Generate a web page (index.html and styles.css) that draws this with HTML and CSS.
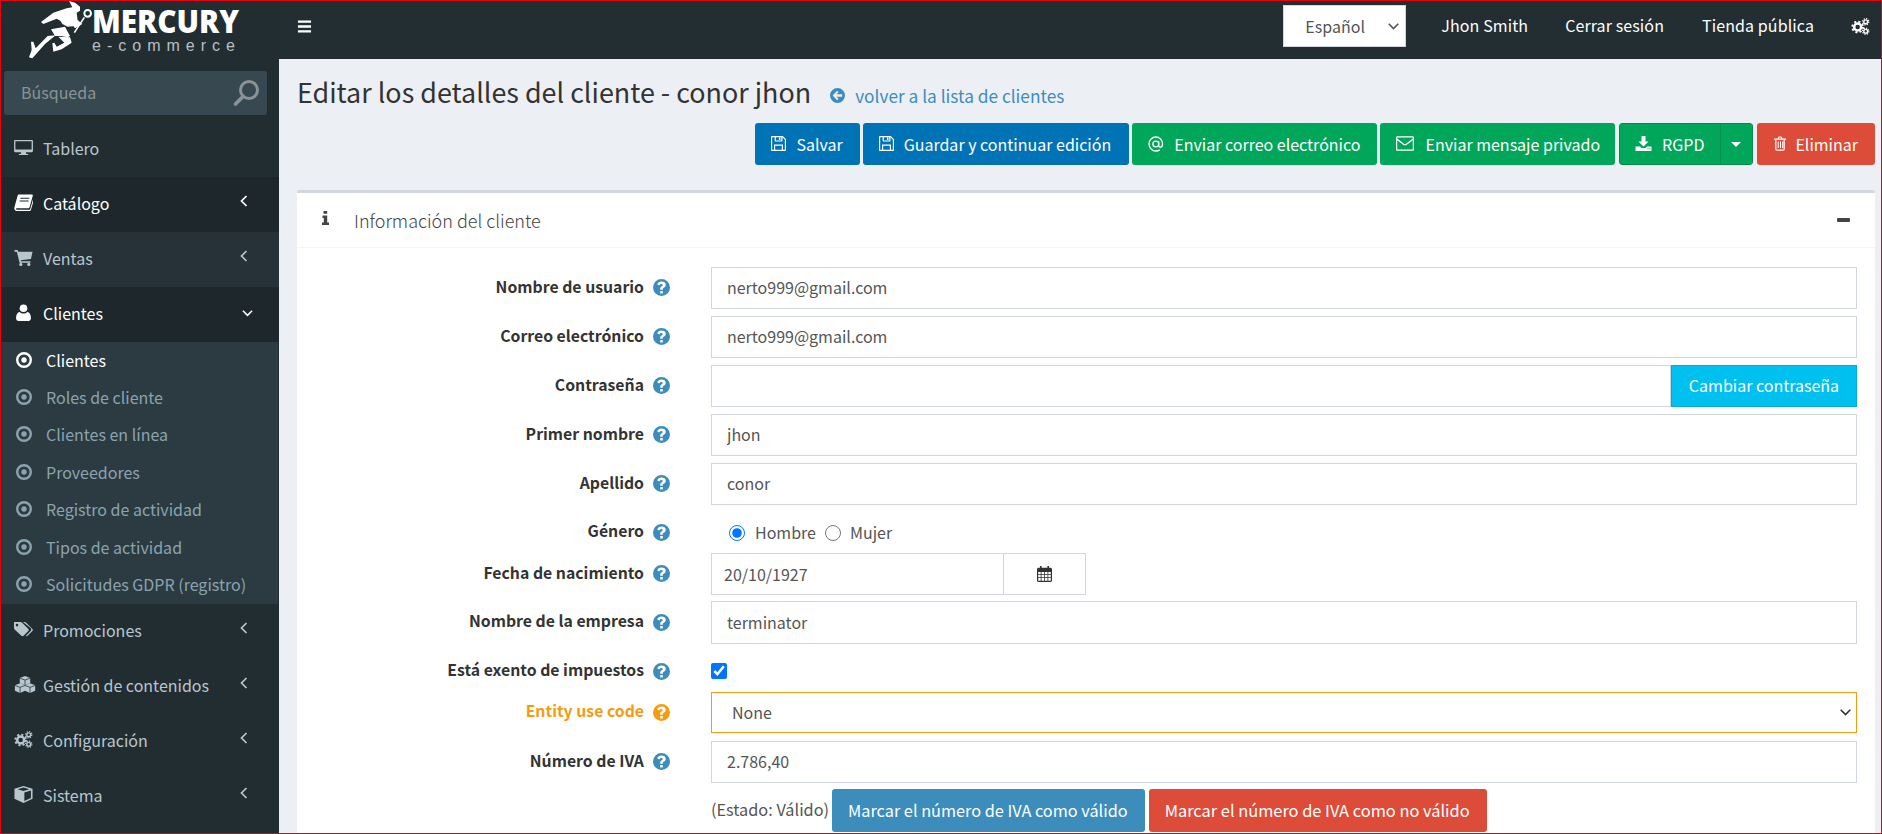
FILE: index.html
```html
<!DOCTYPE html>
<html lang="es">
<head>
    <meta charset="UTF-8">
    <title>Editar los detalles del cliente</title>
    <link rel="stylesheet" href="styles.css">
</head>
<body>
<svg class="icon-defs" width="0" height="0">
    <defs>
        <symbol id="i-bars" viewBox="0 0 16 16"><path d="M1 1.500h14v2.600H1zM1 6.700h14v2.600H1zM1 11.900h14v2.600H1z"/></symbol>
        <symbol id="i-desktop" viewBox="0 0 20 18"><path d="M1.200 1h17.600c.6 0 1.200.5 1.200 1.200v10.600c0 .7-.6 1.200-1.200 1.200H12.500l.5 2h2v1H5v-1h2l.5-2H1.200C.5 14 0 13.500 0 12.800V2.200C0 1.500.5 1 1.200 1zM1.400 2.400v8.600h17.200V2.400z"/></symbol>
        <symbol id="i-book" viewBox="0 0 18 16"><path d="M5 .5h12c.7 0 1 .5.8 1.100l-3 10.700c-.2.800-.8 1.200-1.600 1.200H2.600c-.7 0-1 .6-.7 1 .2.300.6.400 1 .4h11.600c.4 0 .7-.2.8-.6l3-10.200.7.700-3 10.300c-.2.700-.8 1.100-1.500 1.100H2.600C1.200 16 0 14.600.3 13L3.400 1.700C3.600 1 4.200.5 5 .5zM6 3.500v1h8.500v-1zM5.300 6v1h8.500V6z"/></symbol>
        <symbol id="i-cart" viewBox="0 0 17 16"><path d="M0 1h3l.5 1.700H17l-1.500 6.600-9.600 1.200.3 1H15v1.500H4.800L2.200 2.500H0z"/><circle cx="6" cy="14.500" r="1.500"/><circle cx="13.500" cy="14.500" r="1.500"/></symbol>
        <symbol id="i-user" viewBox="0 0 14 16"><circle cx="7" cy="4" r="3.600"/><path d="M3.500 7.500C4.500 8.500 5.600 9 7 9s2.500-.5 3.500-1.500C12.800 7.800 14 10 14 13.500c0 1.500-1 2.500-2.300 2.500H2.300C1 16 0 15 0 13.500 0 10 1.200 7.800 3.500 7.500z"/></symbol>
        <symbol id="i-dot" viewBox="0 0 16 16"><path fill-rule="evenodd" d="M8 0a8 8 0 1 1 0 16A8 8 0 0 1 8 0zm0 2.400a5.600 5.600 0 1 0 0 11.200A5.600 5.600 0 0 0 8 2.400z"/><circle cx="8" cy="8" r="2.700"/></symbol>
        <symbol id="i-tags" viewBox="0 0 19 15"><path fill-rule="evenodd" d="M0 0h6.500c.5 0 1 .2 1.400.6l6.400 6.300c.6.600.6 1.500 0 2.100l-4.800 4.800c-.6.600-1.500.6-2.100 0L.6 7.400C.2 7 0 6.500 0 6zm3 1.800a1.300 1.300 0 1 0 0 2.600 1.300 1.300 0 0 0 0-2.600z"/><path d="M9 0h1.500c.5 0 1 .2 1.400.6l6.500 6.300c.6.600.6 1.500 0 2.100l-4.800 4.800c-.5.500-1.200.6-1.800.2l4.800-4.900c.9-1 .9-2.300 0-3.200z"/></symbol>
        <symbol id="i-cubes" viewBox="0 0 22 18"><path d="M11 0l5.500 2v5.500L11 9.500 5.500 7.500V2zM5.800 7.800L11 9.800v5.900L5.800 18 .3 15.700V9.800zM16.300 7.800l5.500 2v5.900L16.300 18 11 15.700V9.800z"/><path d="M5.500 2.300L11 4.300l5.500-2M11 4.300v5M.3 10l5.500 2 5.200-2M5.800 12v6M11 10l5.300 2 5.500-2M16.300 12v6" fill="none" stroke="#222d32" stroke-width=".8"/></symbol>
        <symbol id="i-cogs" viewBox="0 0 20 18"><g fill="none" stroke="currentColor"><circle cx="7" cy="9.500" r="3.700" stroke-width="2.600"/><circle cx="7" cy="9.500" r="5.700" stroke-width="2" stroke-dasharray="2.200 2.280"/><circle cx="15.500" cy="4" r="2" stroke-width="1.500"/><circle cx="15.500" cy="4" r="3.300" stroke-width="1.300" stroke-dasharray="1.300 1.290"/><circle cx="15.500" cy="14" r="2" stroke-width="1.500"/><circle cx="15.500" cy="14" r="3.300" stroke-width="1.300" stroke-dasharray="1.300 1.290"/></g></symbol>
        <symbol id="i-cube" viewBox="0 0 17 16"><path fill-rule="evenodd" d="M8.500 0L17 2.600v9.400l-8.500 4L0 12V2.600zM8.500 1.400L3 3l5.500 1.800L14 3zM9.300 6.200v8l6.200-3V4.300z"/></symbol>
        <symbol id="i-left" viewBox="0 0 8 12"><path d="M6.500 1L1.500 6l5 5" fill="none" stroke="currentColor" stroke-width="1.700"/></symbol>
        <symbol id="i-down" viewBox="0 0 12 8"><path d="M1 1.500l5 5 5-5" fill="none" stroke="currentColor" stroke-width="1.700"/></symbol>
        <symbol id="i-search" viewBox="0 0 26 26"><circle cx="16" cy="10" r="8.500" fill="none" stroke="currentColor" stroke-width="3"/><path d="M10 16.500L2.500 24" fill="none" stroke="currentColor" stroke-width="3.600" stroke-linecap="round"/></symbol>
        <symbol id="i-save" viewBox="0 0 14 14"><path fill-rule="evenodd" d="M1 0h10l3 3v10c0 .6-.4 1-1 1H1c-.6 0-1-.4-1-1V1c0-.6.4-1 1-1zm.1 1.100v11.800h1.700V8h8.400v4.900h1.700V3.400L10.700 1.200v3.300c0 .4-.3.600-.6.600H4c-.4 0-.6-.2-.6-.6V1.100zm2.800 8v3.800h6.200V9.100zM4.500 1.100v3h5.100v-3zM7.400 1.500h1.400v2.200H7.400z"/></symbol>
        <symbol id="i-at" viewBox="0 0 16 16"><circle cx="7.800" cy="8" r="2.900" fill="none" stroke="currentColor" stroke-width="1.300"/><path d="M10.700 5v4.600c0 1 .6 1.600 1.500 1.600 1.400 0 2.300-1.500 2.300-3.300C14.500 4 11.500 1 7.900 1 4 1 1 4 1 8c0 3.900 3 7 7 7 1.500 0 2.800-.4 3.900-1.100" fill="none" stroke="currentColor" stroke-width="1.300"/></symbol>
        <symbol id="i-envelope" viewBox="0 0 16 13"><path fill-rule="evenodd" d="M1.200 0h13.600c.7 0 1.200.5 1.200 1.200v10.600c0 .7-.5 1.200-1.200 1.200H1.200C.5 13 0 12.500 0 11.800V1.200C0 .5.500 0 1.200 0zm-.1 1.100v1l6 4.600c.5.400 1.300.4 1.800 0l6-4.600v-1zm0 2.400v8.400h13.800V3.500L9.600 7.600c-1 .7-2.200.7-3.200 0z"/></symbol>
        <symbol id="i-download" viewBox="0 0 16 15"><path d="M6 0h4v5.500h3L8 10.500 3 5.500h3zM0 10.500h4.500L6 12h4l1.500-1.500H16V15H0zM12 12.200v1.300h.9v-1.300zM14 12.200v1.300h.9v-1.300z"/></symbol>
        <symbol id="i-trash" viewBox="0 0 13 15"><path fill-rule="evenodd" d="M4 2.500L5 .8c.1-.3.4-.4.7-.4h1.700c.3 0 .6.100.7.400l1 1.700h3.400v1.200H11.300V13c0 1-.6 1.700-1.400 1.700H3.100C2.300 14.700 1.700 14 1.700 13V3.700H.5V2.500zm1.300 0h2.500l-.5-.9H5.800zM2.900 3.700V13c0 .3.100.5.300.5h6.600c.2 0 .3-.2.300-.5V3.700zM4.200 5.500h1v6.500h-1zm2.300 0h1v6.500h-1zm2.200 0h1v6.500h-1z"/></symbol>
        <symbol id="i-info" viewBox="0 0 7 14"><path d="M1.500 0h3.700v2.800H1.500zM.5 4.500h4.700v7H7V14H0v-2.500h1.800V7H.5z"/></symbol>
        <symbol id="i-help" viewBox="0 0 16 16"><path fill-rule="evenodd" d="M8 0a8 8 0 1 1 0 16A8 8 0 0 1 8 0zM6.800 11.300v2.300h2.400v-2.300zM8 2.400C5.900 2.400 4.500 3.500 4 5.100l2 1c.3-.9.900-1.500 1.800-1.500.8 0 1.300.4 1.300 1 0 .7-.5 1-1.200 1.500-.8.500-1.100 1.100-1.100 2v1h2.400v-.6c0-.5.300-.8.900-1.200 1-.6 1.900-1.400 1.900-2.900 0-2-1.800-3-3.900-3z"/></symbol>
        <symbol id="i-calendar" viewBox="0 0 15 16"><path fill-rule="evenodd" d="M3 0h1.600v1.700h5.800V0H12v1.700h1.500c.8 0 1.500.7 1.500 1.500V14.500c0 .8-.7 1.500-1.500 1.500h-12C.7 16 0 15.300 0 14.500V3.200c0-.8.7-1.500 1.500-1.500H3zM1.200 6v2.200h2.500V6zm3.300 0v2.200h2.600V6zm3.400 0v2.200h2.600V6zm3.400 0v2.200h2.500V6zM1.200 9v2.200h2.500V9zm3.300 0v2.200h2.600V9zm3.400 0v2.200h2.600V9zm3.400 0v2.200h2.500V9zM1.200 12v2.800h2.500V12zm3.300 0v2.800h2.600V12zm3.400 0v2.800h2.600V12zm3.400 0v2.800h2.500V12z"/></symbol>
        <symbol id="i-back" viewBox="0 0 16 16"><path fill-rule="evenodd" d="M8 0a8 8 0 1 1 0 16A8 8 0 0 1 8 0zm-.4 3L2.800 8l4.800 5 1.500-1.500L7 9.400h6V6.600H7l2.100-2.100z"/></symbol>
        <symbol id="i-runner" viewBox="0 3 225 180"><path d="M132 3l18 5 15 12v12l-10 6 3 24-8 16-22 2-16-8-6-10-11-6-40 16-7-6 37-28 40-13 17-3zM78 88l42-8 15 28-7 4-20-4-18 0zM68 108l24-2-32 26-38 43-10-3 8-22-2-25 7 0 7 20zM100 110l35 2 5 16-30 20-25 7-3-25 6-2 7 12 23-12zM158 60l14 12-22 13-5-7z"/><circle cx="188" cy="40" r="10" fill="none" stroke="currentColor" stroke-width="6"/><path d="M178 52l-30 46" fill="none" stroke="currentColor" stroke-width="5"/></symbol>
    </defs>
</svg>

<div class="page">
    <aside class="sidebar">
        <div class="logo">
            <svg class="logo-runner"><use href="#i-runner"/></svg>
            <div class="logo-name">MERCURY</div>
            <div class="logo-sub">e-commerce</div>
        </div>
        <div class="search-box">
            <span>Búsqueda</span>
            <svg class="search-icon"><use href="#i-search"/></svg>
        </div>
        <nav class="menu">
            <a class="menu-item"><svg class="menu-icon"><use href="#i-desktop"/></svg>Tablero</a>
            <a class="menu-item hover"><svg class="menu-icon"><use href="#i-book"/></svg>Catálogo<svg class="chev"><use href="#i-left"/></svg></a>
            <a class="menu-item light"><svg class="menu-icon"><use href="#i-cart"/></svg>Ventas<svg class="chev"><use href="#i-left"/></svg></a>
            <a class="menu-item open"><svg class="menu-icon"><use href="#i-user"/></svg>Clientes<svg class="chev-down"><use href="#i-down"/></svg></a>
            <div class="submenu">
                <a class="sub-item active"><svg class="sub-icon"><use href="#i-dot"/></svg>Clientes</a>
                <a class="sub-item"><svg class="sub-icon"><use href="#i-dot"/></svg>Roles de cliente</a>
                <a class="sub-item"><svg class="sub-icon"><use href="#i-dot"/></svg>Clientes en línea</a>
                <a class="sub-item"><svg class="sub-icon"><use href="#i-dot"/></svg>Proveedores</a>
                <a class="sub-item"><svg class="sub-icon"><use href="#i-dot"/></svg>Registro de actividad</a>
                <a class="sub-item"><svg class="sub-icon"><use href="#i-dot"/></svg>Tipos de actividad</a>
                <a class="sub-item"><svg class="sub-icon"><use href="#i-dot"/></svg>Solicitudes GDPR (registro)</a>
            </div>
            <a class="menu-item"><svg class="menu-icon"><use href="#i-tags"/></svg>Promociones<svg class="chev"><use href="#i-left"/></svg></a>
            <a class="menu-item"><svg class="menu-icon wide"><use href="#i-cubes"/></svg>Gestión de contenidos<svg class="chev"><use href="#i-left"/></svg></a>
            <a class="menu-item"><svg class="menu-icon"><use href="#i-cogs"/></svg>Configuración<svg class="chev"><use href="#i-left"/></svg></a>
            <a class="menu-item"><svg class="menu-icon"><use href="#i-cube"/></svg>Sistema<svg class="chev"><use href="#i-left"/></svg></a>
        </nav>
    </aside>

    <div class="content-wrap">
        <header class="topbar">
            <svg class="bars"><use href="#i-bars"/></svg>
            <div class="topbar-right">
                <select class="lang"><option>Español</option></select>
                <a class="top-link">Jhon Smith</a>
                <a class="top-link logout">Cerrar sesión</a>
                <a class="top-link">Tienda pública</a>
                <svg class="top-cogs"><use href="#i-cogs"/></svg>
            </div>
        </header>

        <main class="content">
            <div class="title-row">
                <h1>Editar los detalles del cliente - conor jhon</h1>
                <a class="back-link"><svg class="back-icon"><use href="#i-back"/></svg>volver a la lista de clientes</a>
            </div>
            <div class="actions">
                <button class="btn blue"><svg class="btn-icon"><use href="#i-save"/></svg>Salvar</button>
                <button class="btn blue wide-btn"><svg class="btn-icon"><use href="#i-save"/></svg>Guardar y continuar edición</button>
                <button class="btn green"><svg class="btn-icon at"><use href="#i-at"/></svg>Enviar correo electrónico</button>
                <button class="btn green msg-btn"><svg class="btn-icon env"><use href="#i-envelope"/></svg>Enviar mensaje privado</button>
                <div class="btn-group">
                    <button class="btn green"><svg class="btn-icon dl"><use href="#i-download"/></svg>RGPD</button>
                    <button class="btn green caret-btn"><span class="caret"></span></button>
                </div>
                <button class="btn red"><svg class="btn-icon trash"><use href="#i-trash"/></svg>Eliminar</button>
            </div>

            <section class="card">
                <div class="card-head">
                    <svg class="info-icon"><use href="#i-info"/></svg>
                    <span class="card-title">Información del cliente</span>
                    <span class="collapse"></span>
                </div>
                <form class="card-body">
                    <div class="row">
                        <label>Nombre de usuario<svg class="help"><use href="#i-help"/></svg></label>
                        <input class="field" value="nerto999@gmail.com">
                    </div>
                    <div class="row">
                        <label>Correo electrónico<svg class="help"><use href="#i-help"/></svg></label>
                        <input class="field" value="nerto999@gmail.com">
                    </div>
                    <div class="row">
                        <label>Contraseña<svg class="help"><use href="#i-help"/></svg></label>
                        <div class="pass-group">
                            <input class="field" type="text">
                            <button type="button" class="pass-btn">Cambiar contraseña</button>
                        </div>
                    </div>
                    <div class="row">
                        <label>Primer nombre<svg class="help"><use href="#i-help"/></svg></label>
                        <input class="field" value="jhon">
                    </div>
                    <div class="row">
                        <label>Apellido<svg class="help"><use href="#i-help"/></svg></label>
                        <input class="field" value="conor">
                    </div>
                    <div class="row row-gender">
                        <label>Género<svg class="help"><use href="#i-help"/></svg></label>
                        <div class="radios">
                            <input type="radio" name="gender" checked><span>Hombre</span>
                            <input type="radio" name="gender"><span>Mujer</span>
                        </div>
                    </div>
                    <div class="row row-date">
                        <label>Fecha de nacimiento<svg class="help"><use href="#i-help"/></svg></label>
                        <div class="date-group">
                            <input class="date-field" value="20/10/1927">
                            <span class="date-btn"><svg class="cal"><use href="#i-calendar"/></svg></span>
                        </div>
                    </div>
                    <div class="row row-company">
                        <label>Nombre de la empresa<svg class="help"><use href="#i-help"/></svg></label>
                        <input class="field" value="terminator">
                    </div>
                    <div class="row row-check">
                        <label>Está exento de impuestos<svg class="help"><use href="#i-help"/></svg></label>
                        <input class="check" type="checkbox" checked>
                    </div>
                    <div class="row row-entity">
                        <label class="warn">Entity use code<svg class="help"><use href="#i-help"/></svg></label>
                        <select class="field warn-field"><option>None</option></select>
                    </div>
                    <div class="row row-iva">
                        <label>Número de IVA<svg class="help"><use href="#i-help"/></svg></label>
                        <input class="field" value="2.786,40">
                    </div>
                    <div class="row row-vat">
                        <span></span>
                        <div class="vat-actions">
                            <span class="vat-status">(Estado: Válido)</span>
                            <button type="button" class="btn vat-blue">Marcar el número de IVA como válido</button>
                            <button type="button" class="btn red vat-red">Marcar el número de IVA como no válido</button>
                        </div>
                    </div>
                </form>
            </section>
        </main>
    </div>
</div>
</body>
</html>
```

FILE: styles.css
```css
* {
    box-sizing: border-box;
}
html, body {
    margin: 0;
    height: 100%;
    overflow: hidden;
}
body {
    font-family: "Noto Sans CJK SC", "Source Sans Pro", "Open Sans", sans-serif;
    font-size: 16px;
    color: #333;
    background-color: #ecf0f5;
}
svg {
    fill: currentColor;
}
.icon-defs {
    position: absolute;
}
.page {
    display: flex;
    height: 834px;
    border: 1px solid #e8000d;
    overflow: hidden;
}

/* sidebar */
.sidebar {
    width: 278px;
    flex: none;
    background-color: #222d32;
    color: #b8c7ce;
}
.logo {
    height: 58px;
    position: relative;
    padding: 5px 0 0 91px;
    color: #fff;
}
.logo-runner {
    position: absolute;
    left: 24px;
    top: 0;
    width: 75px;
    height: 60px;
}
.logo-name {
    font-family: "Open Sans", sans-serif;
    font-weight: 800;
    font-size: 31px;
    line-height: 30px;
    transform: scaleX(.96);
    transform-origin: left;
    white-space: nowrap;
}
.logo-sub {
    font-family: "Liberation Sans", sans-serif;
    font-size: 16px;
    line-height: 14px;
    letter-spacing: 6px;
    margin-top: 3px;
    color: #b9bfc2;
    white-space: nowrap;
}
.search-box {
    margin: 12px 12px 0 3px;
    height: 44px;
    background-color: #374850;
    border-radius: 3px;
    padding: 0 8px 2px 17px;
    display: flex;
    align-items: center;
    justify-content: space-between;
    color: #8b9396;
}
.search-icon {
    width: 26px;
    height: 26px;
    margin-top: 2px;
}
.menu {
    margin-top: 7px;
}
.menu-item {
    height: 55px;
    display: flex;
    align-items: center;
    padding: 0 0 4px 13px;
    position: relative;
    color: #b8c7ce;
    line-height: 20px;
}
.menu-item.hover, .menu-item.open {
    background-color: #1e282c;
    color: #fff;
}
.menu-item.light {
    background-color: #263238;
}
.menu-icon {
    width: 19px;
    height: 17px;
    margin-right: 10px;
    flex: none;
}
.menu-icon.wide {
    width: 22px;
    margin-right: 7px;
}
.chev {
    position: absolute;
    left: 239px;
    top: 18px;
    width: 8px;
    height: 12px;
}
.chev-down {
    position: absolute;
    left: 241px;
    top: 22px;
    width: 11px;
    height: 8px;
}
.submenu {
    width: 277px;
    height: 262px;
    background-color: #2c3b41;
}
.sub-item {
    height: 37.400px;
    display: flex;
    align-items: center;
    padding: 0 0 2px 15px;
    color: #8aa4af;
}
.sub-item.active {
    color: #fff;
}
.sub-icon {
    width: 16px;
    height: 16px;
    margin-right: 14px;
    flex: none;
}

/* top bar */
.content-wrap {
    flex: 1;
    min-width: 0;
}
.topbar {
    height: 58px;
    background-color: #232e33;
    color: #fff;
    display: flex;
    align-items: center;
    justify-content: space-between;
    padding: 0 11px 8px 18px;
}
.bars {
    width: 15px;
    height: 15px;
}
.topbar-right {
    display: flex;
    align-items: center;
}
.lang {
    width: 123px;
    height: 42px;
    padding: 0 15px 0 21px;
    margin-right: 35px;
    font: inherit;
    color: #555;
    appearance: none;
    background: #fff url("data:image/svg+xml,%3Csvg xmlns='http://www.w3.org/2000/svg' width='11' height='7'%3E%3Cpath d='M.7.7l4.800 4.800L10.300.7' fill='none' stroke='%23555' stroke-width='1.600'/%3E%3C/svg%3E") no-repeat right 6px center;
    border: 1px solid #d2d6de;
    border-radius: 0;
}
.top-link {
    margin-right: 37px;
    letter-spacing: .1px;
    padding-bottom: 2px;
}
.top-link.logout {
    margin-right: 38px;
}
.top-cogs {
    width: 19px;
    height: 17px;
}

/* main */
.content {
    padding: 0 6px 0 18px;
}
.title-row {
    display: flex;
    align-items: baseline;
    padding-top: 15px;
    height: 64px;
}
h1 {
    margin: 0;
    font-size: 26.900px;
    font-weight: 400;
    line-height: 36px;
    color: #333;
}
.back-link {
    margin-left: 19px;
    font-size: 17.300px;
    color: #3c8dbc;
    display: flex;
    align-items: center;
}
.back-icon {
    width: 15px;
    height: 15px;
    margin-right: 10px;
}
.actions {
    display: flex;
    justify-content: flex-end;
    gap: 3px;
}
.btn {
    height: 42px;
    padding: 0 16px 1px 15px;
    font: inherit;
    line-height: 20px;
    color: #fff;
    border: 1px solid transparent;
    border-radius: 3px;
    display: flex;
    align-items: center;
    white-space: nowrap;
}
.wide-btn {
    padding-right: 17px;
}
.msg-btn {
    padding-right: 14px;
}
.blue {
    background-color: #0073b7;
}
.green {
    background-color: #00a65a;
}
.red {
    background-color: #dd4b39;
}
.vat-blue {
    background-color: #3c8dbc;
}
.btn-icon {
    width: 15px;
    height: 15px;
    margin-right: 10px;
}
.btn-icon.at {
    width: 16px;
    height: 16px;
    margin-right: 10px;
}
.btn-icon.env {
    width: 18px;
    margin-right: 11px;
}
.btn-icon.dl {
    width: 17px;
    margin-right: 10px;
}
.btn-icon.trash {
    width: 14px;
    margin-right: 8px;
}
.btn-group {
    display: flex;
    border: 1px solid #008d4c;
    border-radius: 3px;
    margin: 0 1px;
}
.btn-group .btn {
    height: 40px;
    border: 0;
    border-radius: 0;
}
.caret-btn {
    border-left: 1px solid #008d4c !important;
    width: 32px;
    padding: 0 10px;
}
.caret {
    border-left: 5px solid transparent;
    border-right: 5px solid transparent;
    border-top: 5px solid #fff;
}

/* card */
.card {
    margin-top: 25px;
    background-color: #fff;
    border-top: 3px solid #d2d6de;
    border-radius: 3px;
    height: 700px;
}
.card-head {
    height: 55px;
    display: flex;
    align-items: center;
    padding: 0 8px 0 25px;
    border-bottom: 1px solid #f4f4f4;
    color: #444;
}
.info-icon {
    width: 7px;
    height: 14px;
    margin-top: -4px;
}
.card-title {
    flex: 1;
    margin-left: 25px;
    font-size: 18px;
    font-weight: 300;
    color: #444;
}
.collapse {
    width: 13px;
    height: 4px;
    margin-right: 17px;
    border-radius: 1px;
    background-color: #444;
}
.card-body {
    padding-top: 19px;
}
.row {
    display: grid;
    grid-template-columns: 414px 1146px;
    align-items: center;
    margin-bottom: 7px;
}
.row label {
    width: 373px;
    display: flex;
    align-items: center;
    justify-content: flex-end;
    font-size: 15.800px;
    font-weight: 700;
    line-height: 20px;
    padding-bottom: 3px;
}
.help {
    width: 17px;
    height: 17px;
    margin: 2px 0 0 9px;
    color: #3c8dbc;
}
.field {
    width: 100%;
    height: 42px;
    padding: 0 15px 2px;
    font: inherit;
    line-height: 20px;
    color: #555;
    background-color: #fff;
    border: 1px solid #d2d6de;
    border-radius: 0;
}
.warn {
    color: #f39c12;
}
.warn .help {
    color: #f39c12;
}
.warn-field {
    height: 41px;
    padding-left: 20px;
    appearance: none;
    background: #fff url("data:image/svg+xml,%3Csvg xmlns='http://www.w3.org/2000/svg' width='11' height='7'%3E%3Cpath d='M.7.7l4.800 4.800L10.300.7' fill='none' stroke='%23333' stroke-width='1.600'/%3E%3C/svg%3E") no-repeat right 5px center;
    border-color: #f39c12;
}
.pass-group {
    display: flex;
}
.pass-group .field {
    flex: 1;
    min-width: 0;
}
.pass-btn {
    width: 186px;
    flex: none;
    height: 42px;
    padding: 0 0 2px;
    font: inherit;
    color: #fff;
    background-color: #00c0ef;
    border: 1px solid #00acd6;
}
.row-gender {
    margin-bottom: 0;
    height: 41px;
}
.radios {
    display: flex;
    align-items: center;
    padding-left: 18px;
    color: #555;
}
.radios input {
    margin: 0 10px 0 0;
    width: 16px;
    height: 16px;
}
.radios span {
    margin-right: 9px;
    padding-bottom: 2px;
}
.radios input + span + input {
    margin-right: 9px;
}
.row-date {
    margin-bottom: 6px;
}
.date-group {
    display: flex;
    width: 375px;
    height: 42px;
}
.date-field {
    width: 293px;
    font: inherit;
    color: #555;
    padding: 0 12px;
    border: 1px solid #d2d6de;
    border-radius: 0;
}
.date-btn {
    flex: 1;
    display: flex;
    align-items: center;
    justify-content: center;
    border: 1px solid #d2d6de;
    border-left: 0;
}
.cal {
    width: 15px;
    height: 16px;
    color: #333;
}
.row-company .field {
    height: 43px;
}
.row-check {
    height: 41px;
    margin-bottom: 0;
}
.check {
    margin: 0 0 2px;
    width: 16px;
    height: 16px;
}
.row-entity {
    margin-bottom: 8px;
}
.row-iva {
    margin-bottom: 6px;
}
.vat-actions {
    display: flex;
    align-items: center;
    gap: 3px;
    font-size: 16.300px;
}
.vat-actions .btn {
    height: 43px;
    font-size: 16.300px;
    padding-bottom: 2px;
}
.vat-actions .vat-red {
    margin-left: 1px;
    font-size: 16.400px;
}
.vat-status {
    color: #555;
    padding-bottom: 3px;
}
```
